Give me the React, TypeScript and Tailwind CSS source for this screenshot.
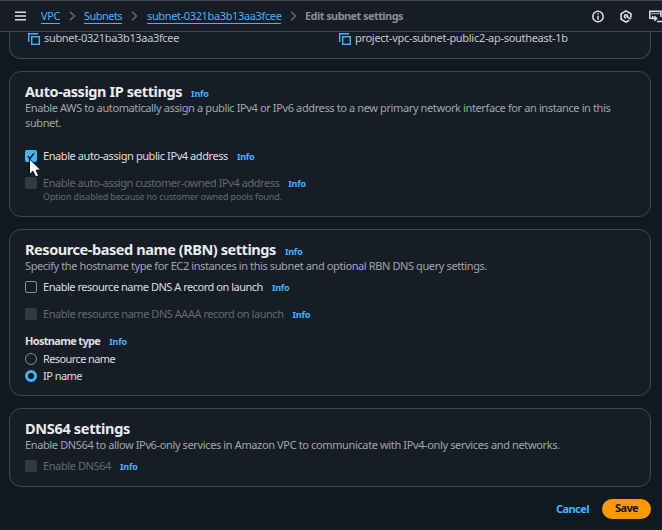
import type { ReactNode } from "react";

function Info({ className = "" }: { className?: string }) {
  return (
    <a className={`ml-[9px] text-[9px] font-bold tracking-[-0.22px] text-[#42b4ff] ${className}`}>Info</a>
  );
}

function Card({ className = "", children }: { className?: string; children: ReactNode }) {
  return (
    <section className={`mx-[9px] w-[642px] shrink-0 rounded-xl border border-[#424650] bg-[#161d26] px-[15px] ${className}`}>
      {children}
    </section>
  );
}

function Title({ className = "", info, children }: { className?: string; info?: boolean; children: ReactNode }) {
  return (
    <h2 className="flex h-5 items-baseline leading-5">
      <span className={`text-[14.5px] font-bold text-[#ebebf0] ${className}`}>{children}</span>
      {info && <Info />}
    </h2>
  );
}

function Description({ className = "", children }: { className?: string; children: ReactNode }) {
  return <p className={`text-[11px] leading-[15px] whitespace-nowrap text-[#a4a4ad] ${className}`}>{children}</p>;
}

type State = "checked" | "empty" | "disabled";

function Check({ state, label, className = "", info = true }: { state: State; label: string; className?: string; info?: boolean }) {
  return (
    <div className="flex h-3 items-center whitespace-nowrap">
      {state === "checked" && (
        <span className="flex size-3 shrink-0 items-center justify-center rounded-[2px] bg-[#42b4ff]">
          <svg width="12" height="12" viewBox="0 0 12 12" fill="none" stroke="#0f141a" strokeWidth="1.5">
            <path d="M2.8 6.2 5 8.4 9 3.4" />
          </svg>
        </span>
      )}
      {state === "empty" && <span className="size-3 shrink-0 rounded-[2px] border border-[#8c8c94]" />}
      {state === "disabled" && <span className="size-3 shrink-0 rounded-[2px] bg-[#333843]" />}
      <span className="ml-[6px] flex items-baseline leading-3">
        <span className={`text-[11px] ${state === "disabled" ? "text-[#656871]" : "text-[#dedee3]"} ${className}`}>{label}</span>
        {info && <Info />}
      </span>
    </div>
  );
}

function Radio({ on, label, className }: { on?: boolean; label: string; className: string }) {
  return (
    <div className="flex h-3 items-center">
      <span className={`size-3 shrink-0 rounded-full ${on ? "border-[3.5px] border-[#42b4ff] bg-[#0f141a]" : "border border-[#8c8c94]"}`} />
      <span className={`ml-[6px] text-[11px] leading-3 text-[#dedee3] ${className}`}>{label}</span>
    </div>
  );
}

function Chevron({ className }: { className: string }) {
  return (
    <svg className={`shrink-0 ${className}`} width="7" height="10" viewBox="0 0 7 10" fill="none" stroke="#656871" strokeWidth="1.5">
      <path d="M1 .8 5.5 5 1 9.2" />
    </svg>
  );
}

function CopyIcon() {
  return (
    <svg className="mt-px shrink-0" width="12" height="12" viewBox="0 0 12 12" fill="none" stroke="#42b4ff" strokeWidth="1.4">
      <path d="M.7 9V.7H10" />
      <rect x="3.7" y="3.7" width="7.6" height="7.6" />
    </svg>
  );
}

export default function App() {
  return (
    <div className="relative flex h-[530px] w-[662px] flex-col overflow-hidden bg-[#12181f] font-['Noto_Sans','Open_Sans',sans-serif]">
      <header className="flex h-8 shrink-0 items-center border-y border-[#424650] bg-[#161d26] pl-[15px] text-[11px] whitespace-nowrap">
        <svg className="shrink-0" width="11" height="10" viewBox="0 0 11 10" stroke="#dedee3" strokeWidth="1.6">
          <path d="M0 1.2h11M0 5h11M0 8.8h11" />
        </svg>
        <a className="ml-[15px] w-[19px] border-b border-[#42b4ff] leading-[14px] tracking-[-0.4px] text-[#42b4ff]">VPC</a>
        <Chevron className="ml-[9px]" />
        <a className="ml-2 w-[38px] border-b border-[#42b4ff] leading-[14px] tracking-[-0.54px] text-[#42b4ff]">Subnets</a>
        <Chevron className="ml-[9px]" />
        <a className="ml-[9px] w-[134px] border-b border-[#42b4ff] leading-[14px] tracking-[-0.36px] text-[#42b4ff]">subnet-0321ba3b13aa3fcee</a>
        <Chevron className="ml-[9px]" />
        <span className="ml-2 font-bold tracking-[-0.58px] text-[#8c8c94]">Edit subnet settings</span>
        <div className="ml-auto flex h-[14px] items-center pt-px">
          <svg className="mr-[15px] shrink-0" width="13" height="13" viewBox="0 0 13 13" fill="none" stroke="#dedee3" strokeWidth="1.5">
            <circle cx="6" cy="6.5" r="5.2" />
            <path d="M6 5.7v4M6 3.2v1.4" />
          </svg>
          <svg className="mr-4 shrink-0" width="13" height="13" viewBox="0 0 13 13" fill="none" stroke="#dedee3" strokeWidth="1.6">
            <path d="M10.9 7.4V3.7L6 .9 1.1 3.7v5.6L6 12.1l3.2-1.8" />
            <path d="M7.6 6.3a1.6 1.6 0 1 0-1.6 1.6M6.3 6.3l4.8 2.8" />
          </svg>
          <svg className="shrink-0" width="13" height="13" viewBox="0 0 13 13" fill="none" stroke="#dedee3" strokeWidth="1.5">
            <path d="M3.2 8.3H.8V1.2H12V7" />
            <path d="M2.5 3.4h9" strokeDasharray="1.2 .8" />
            <path d="M3.8 6v2.5h3.5M5.4 6.3l2.2 2.2-2.2 2.3M8 11.6h5" />
          </svg>
        </div>
      </header>

      <section className="mx-[9px] flex h-[27px] w-[642px] shrink-0 items-start rounded-b-xl border border-t-0 border-[#424650] bg-[#161d26] pl-[18px] text-[11px] leading-3 whitespace-nowrap text-[#c6c6cd]">
        <div className="flex w-[311px] items-start gap-1">
          <CopyIcon />
          <span className="tracking-[-0.34px]">subnet-0321ba3b13aa3fcee</span>
        </div>
        <div className="flex items-start gap-1">
          <CopyIcon />
          <span className="tracking-[-0.3px]">project-vpc-subnet-public2-ap-southeast-1b</span>
        </div>
      </section>

      <Card className="mt-3 h-[146px] pt-[9px]">
        <Title info className="tracking-[-0.41px]">Auto-assign IP settings</Title>
        <Description className="-mt-px tracking-[-0.382px]">
          Enable AWS to automatically assign a public IPv4 or IPv6 address to a new primary network interface for an instance in this
          <br />
          subnet.
        </Description>
        <div className="mt-5 flex flex-col gap-[15px]">
          <Check state="checked" label="Enable auto-assign public IPv4 address" className="tracking-[-0.42px]" />
          <Check state="disabled" label="Enable auto-assign customer-owned IPv4 address" className="tracking-[-0.45px]" />
        </div>
        <p className="mt-[2px] ml-[18px] text-[9px] leading-3 tracking-[-0.14px] text-[#656871]">
          Option disabled because no customer owned pools found.
        </p>
      </Card>

      <Card className="mt-3 h-[167px] pt-[9px]">
        <Title info className="tracking-[-0.43px]">Resource-based name (RBN) settings</Title>
        <Description className="-mt-px tracking-[-0.395px]">
          Specify the hostname type for EC2 instances in this subnet and optional RBN DNS query settings.
        </Description>
        <div className="mt-2 flex flex-col gap-[15px]">
          <Check state="empty" label="Enable resource name DNS A record on launch" className="tracking-[-0.48px]" />
          <Check state="disabled" label="Enable resource name DNS AAAA record on launch" className="tracking-[-0.46px]" />
        </div>
        <div className="mt-[15px] flex h-3 items-baseline leading-3">
          <span className="text-[11px] font-bold tracking-[-0.68px] text-[#dedee3]">Hostname type</span>
          <Info />
        </div>
        <div className="mt-[6px] flex flex-col gap-[5px]">
          <Radio label="Resource name" className="tracking-[-0.6px]" />
          <Radio on label="IP name" className="tracking-[-0.53px]" />
        </div>
      </Card>

      <Card className="mt-3 h-[79px] pt-[9px]">
        <Title className="tracking-[-0.32px]">DNS64 settings</Title>
        <Description className="-mt-px tracking-[-0.37px]">
          Enable DNS64 to allow IPv6-only services in Amazon VPC to communicate with IPv4-only services and networks.
        </Description>
        <div className="mt-2">
          <Check state="disabled" label="Enable DNS64" className="tracking-[-0.4px]" />
        </div>
      </Card>

      <footer className="mt-3 mr-[11px] flex items-center justify-end text-[11px] font-bold">
        <button className="mr-[13px] leading-[18px] tracking-[-0.55px] text-[#42b4ff]">Cancel</button>
        <button className="h-5 w-[49px] rounded-full bg-[#ff9900] pb-0.5 leading-[18px] tracking-[-0.6px] text-[#0f141a]">Save</button>
      </footer>

      <svg className="absolute top-[158px] left-[28px]" width="14" height="22" viewBox="0 0 14 22">
        <path d="M1.5 1v15.6l3.6-3.4 2.5 5.8 3-1.3-2.5-5.6h4.7z" fill="#fff" stroke="#0b0e13" strokeWidth="1" />
      </svg>
    </div>
  );
}
